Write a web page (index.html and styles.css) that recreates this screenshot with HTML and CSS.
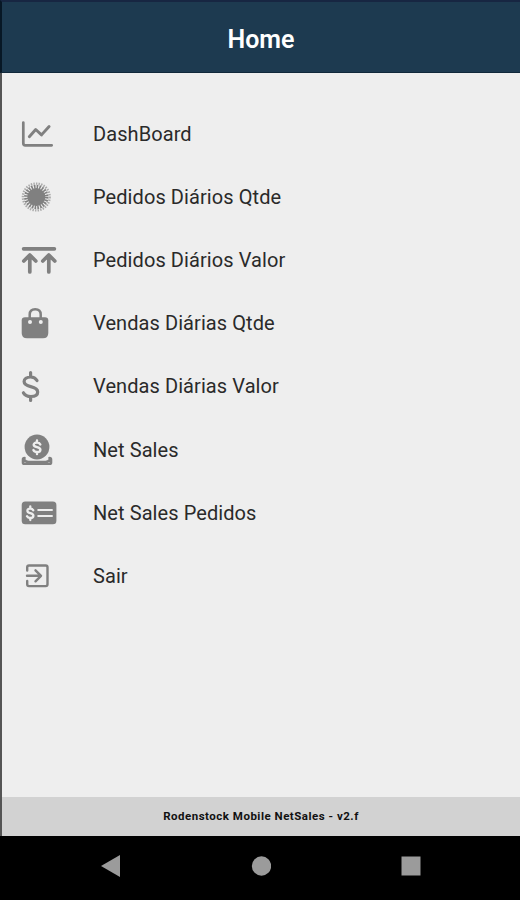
FILE: index.html
```
<!DOCTYPE html>
<html lang="pt-BR">
<head>
    <meta charset="UTF-8">
    <meta name="viewport" content="width=device-width, initial-scale=1.0">
    <title>Home</title>
    <link rel="stylesheet" href="styles.css">
</head>
<body>
    <header class="header">
        <h1>Home</h1>
    </header>

    <ul class="menu">
        <li>
            <svg class="icon line" viewBox="0 0 38 36">
                <path d="M3.3 6.5v20.8q0 2 2 2h26.4" stroke-width="2.7"/>
                <path d="M9.3 20.7l6.4-7.2 5.8 5.4 7.6-8.4" stroke-width="2.9"/>
            </svg>
            <span>DashBoard</span>
        </li>
        <li>
            <svg class="icon" viewBox="0 0 38 36">
                <circle cx="16.3" cy="18" r="9"/>
                <circle class="rays" cx="16.3" cy="18" r="10.2" stroke-width="4" stroke-dasharray="1.6 1.07"/>
                <circle class="rays faint" cx="16.3" cy="18" r="13.4" stroke-width="2.4" stroke-dasharray="1.4 1.2"/>
            </svg>
            <span>Pedidos Diários Qtde</span>
        </li>
        <li>
            <svg class="icon line" viewBox="0 0 38 36">
                <path d="M3.6 6.8h30.8M9.8 30V13M3.8 19l6-6 6 6M28.8 30V13M22.8 19l6-6 6 6" stroke-width="3.7"/>
            </svg>
            <span>Pedidos Diários Valor</span>
        </li>
        <li>
            <svg class="icon" viewBox="0 0 38 36">
                <path d="M5 12.3h20q3.3 0 3.3 3.3V28q0 5.3-5.3 5.3H7q-5.3 0-5.3-5.3V15.6q0-3.3 3.3-3.3z"/>
                <path class="stroke" d="M9.7 16V9.5q0-5.3 5.5-5.3t5.5 5.3V16" stroke-width="2.5"/>
                <circle class="cut" cx="10" cy="17" r="2"/>
                <circle class="cut" cx="20.8" cy="17" r="2"/>
            </svg>
            <span>Vendas Diárias Qtde</span>
        </li>
        <li>
            <svg class="icon line" viewBox="0 0 38 36">
                <path d="M10.6 4.5v4M10.6 28.5v4M17 12.5C15.7 10.3 13.7 9 10.7 9c-4 0-6.6 1.8-6.6 4.5 0 3.3 2.8 4.2 6.6 5.1 4.4 1 7 2.2 7 5.4 0 3-2.8 4.5-6.8 4.5-3.6 0-6-1.3-7.5-3.7" stroke-width="3.2"/>
            </svg>
            <span>Vendas Diárias Valor</span>
        </li>
        <li>
            <svg class="icon" viewBox="0 0 38 36">
                <circle cx="17" cy="15" r="12.4"/>
                <path class="cut-line" d="M17 8.5v2M17 20v2M20.3 12.5c-.6-1.3-1.700-2-3.300-2-2 0-3.300.9-3.300 2.300 0 1.500 1.400 1.900 3.300 2.300 2.100.5 3.400 1 3.400 2.600 0 1.400-1.400 2.400-3.400 2.400-1.800 0-3-.7-3.600-2" stroke-width="2.4"/>
                <path class="stroke" d="M4.5 26q-1.500 0-1.500 1.500v3q0 1.300 1.300 1.300h25.400q1.300 0 1.300-1.300v-3q0-1.500-1.500-1.500M4 27.500q2 2.500 4.500 2.500h17q2.500 0 4.500-2.500" stroke-width="2.6"/>
            </svg>
            <span>Net Sales</span>
        </li>
        <li>
            <svg class="icon" viewBox="0 0 38 36">
                <rect x="1.7" y="6.5" width="34.7" height="22.8" rx="3.5"/>
                <path class="cut-line" d="M10.3 11.5v2M10.3 23v2M13.2 15.3c-.6-1.2-1.5-1.7-2.9-1.7-1.8 0-2.9.9-2.9 2.2 0 1.5 1.2 2 2.9 2.4 1.9.5 3.1 1 3.1 2.6 0 1.4-1.2 2.3-3.1 2.3-1.6 0-2.7-.6-3.3-1.8" stroke-width="2.3"/>
                <path class="cut-line" d="M18.3 15h13.6M18.3 21h13.6" stroke-width="2.2"/>
            </svg>
            <span>Net Sales Pedidos</span>
        </li>
        <li>
            <svg class="icon line" viewBox="0 0 38 36">
                <path d="M7.2 12.5V9.3q0-1.8 1.8-1.8h16.7q1.8 0 1.8 1.8v17q0 1.8-1.8 1.8H9q-1.8 0-1.8-1.8V23" stroke-width="2.4"/>
                <path d="M7 17.8h13.5M15.5 12.3l5.5 5.5-5.5 5.5" stroke-width="2.4"/>
            </svg>
            <span>Sair</span>
        </li>
    </ul>

    <footer class="version">Rodenstock Mobile NetSales - v2.f</footer>

    <nav class="navbar">
        <svg viewBox="0 0 20 24"><path d="M0 12L19 1v22z"/></svg>
        <svg viewBox="0 0 20 24"><circle cx="10.5" cy="12" r="9.7"/></svg>
        <svg viewBox="0 0 20 24"><path d="M.5 2.5h19v19H.5z"/></svg>
    </nav>
</body>
</html>
```
FILE: styles.css
```
* {
    box-sizing: border-box;
}

body {
    font-family: Roboto, sans-serif;
    margin: 0;
    height: 900px;
    display: flex;
    flex-direction: column;
    overflow: hidden;
    background-color: #eee;
    color: #2a2a2a;
}

.header {
    height: 73px;
    padding-top: 4px;
    display: flex;
    justify-content: center;
    align-items: center;
    background-color: #1d3a50;
    border-top: 2px solid #172642;
    border-bottom: 1px solid #10283a;
    border-left: 2px solid #071725;
}

h1 {
    margin: 0;
    font-size: 25px;
    font-weight: 600;
    color: #fff;
}

.menu {
    flex: 1;
    margin: 0;
    padding: 29px 0 0 18px;
    list-style: none;
    border-left: 2px solid #555;
}

.menu li {
    height: 63.2px;
    display: flex;
    align-items: center;
    gap: 35px;
    font-size: 20px;
    letter-spacing: 0.08px;
}

.icon {
    width: 38px;
    height: 36px;
    fill: #808080;
}

.line,
.stroke,
.rays {
    fill: none;
    stroke: #808080;
}

.line,
.stroke {
    stroke-linecap: round;
    stroke-linejoin: round;
}

.faint {
    stroke: #aaa;
}

.cut {
    fill: #eee;
}

.cut-line {
    fill: none;
    stroke: #eee;
    stroke-linecap: round;
}

.version {
    height: 39px;
    padding-bottom: 1px;
    display: flex;
    justify-content: center;
    align-items: center;
    background-color: #d2d2d2;
    border-left: 2px solid #555;
    font-size: 11.5px;
    font-weight: 700;
    letter-spacing: 0.5px;
    color: #111;
}

.navbar {
    height: 64px;
    padding: 0 99px 4px 101px;
    display: flex;
    justify-content: space-between;
    align-items: center;
    background-color: #000;
}

.navbar svg {
    width: 20px;
    height: 24px;
    fill: #9b9b9b;
}
```
